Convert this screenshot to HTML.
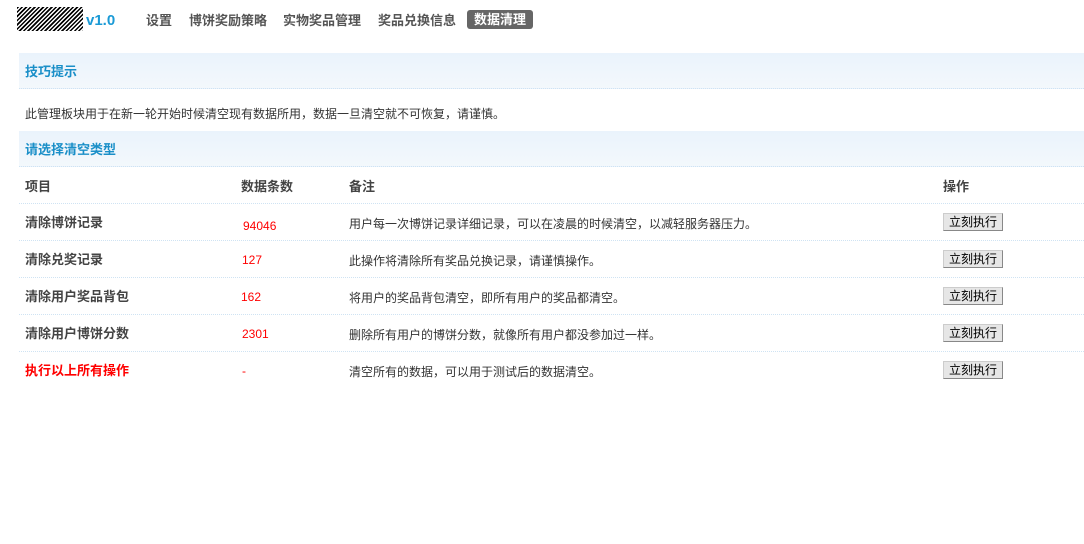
<!DOCTYPE html>
<html><head><meta charset="utf-8"><style>
*{margin:0;padding:0;box-sizing:border-box}
body{width:1084px;height:544px;background:#fff;font-family:"Liberation Sans","Noto Sans CJK SC",sans-serif;font-size:12px;color:#333;position:relative;overflow:hidden}
.a{position:absolute;white-space:nowrap}
.logo{left:17px;top:7px;width:66px;height:24px;background:repeating-linear-gradient(135deg,#000 0 1.5px,#fff 1.5px 3px)}
.ver{left:86px;top:12px;font-size:15px;font-weight:bold;color:#1a9ad6}
.nav{top:10px;font-size:13px;font-weight:bold;color:#555}
.act{left:467px;top:10px;width:66px;height:19px;background:#666;color:#fff;border-radius:3px;font-size:13px;font-weight:bold;text-align:center;line-height:19px}
.hd{left:19px;width:1065px;height:36px;background:linear-gradient(#eaf3fc,#f3f8fc);border-bottom:1px dotted #cfe3f3;color:#1a8fc8;font-weight:bold;font-size:13px;line-height:36px;padding-left:6px}
.line{left:19px;width:1065px;height:0;border-top:1px dotted #cfe3f3}
.th{font-weight:bold;font-size:13px;color:#444}
.nm{font-weight:bold;font-size:13px;color:#444}
.num{color:#f00;font-size:12px}
.btn{left:943px;width:60px;height:18px;background:#e6e6e6;border:1px solid #888;border-top-color:#ccc;border-left-color:#ccc;font-size:12px;text-align:center;line-height:16px;color:#000}
</style></head><body>
<div class="a logo"></div>
<div class="a ver">v1.0</div>
<div class="a nav" style="left:146px">设置</div>
<div class="a nav" style="left:189px">博饼奖励策略</div>
<div class="a nav" style="left:283px">实物奖品管理</div>
<div class="a nav" style="left:378px">奖品兑换信息</div>
<div class="a act">数据清理</div>
<div class="a hd" style="top:53px;line-height:37px">技巧提示</div>
<div class="a" style="left:25px;top:105px">此管理板块用于在新一轮开始时候清空现有数据所用，数据一旦清空就不可恢复，请谨慎。</div>
<div class="a hd" style="top:131px;line-height:38px">请选择清空类型</div>
<div class="a th" style="left:25px;top:176px">项目</div>
<div class="a th" style="left:241px;top:176px">数据条数</div>
<div class="a th" style="left:349px;top:176px">备注</div>
<div class="a th" style="left:943px;top:176px">操作</div>
<div class="a line" style="top:203px"></div>
<div class="a line" style="top:240px"></div>
<div class="a line" style="top:277px"></div>
<div class="a line" style="top:314px"></div>
<div class="a line" style="top:351px"></div>

<div class="a nm" style="left:25px;top:212px">清除博饼记录</div>
<div class="a num" style="left:243px;top:219px">94046</div>
<div class="a" style="left:349px;top:215px">用户每一次博饼记录详细记录，可以在凌晨的时候清空，以减轻服务器压力。</div>
<div class="a btn" style="top:213px">立刻执行</div>

<div class="a nm" style="left:25px;top:249px">清除兑奖记录</div>
<div class="a num" style="left:242px;top:253px">127</div>
<div class="a" style="left:349px;top:252px">此操作将清除所有奖品兑换记录，请谨慎操作。</div>
<div class="a btn" style="top:250px">立刻执行</div>

<div class="a nm" style="left:25px;top:286px">清除用户奖品背包</div>
<div class="a num" style="left:241px;top:290px">162</div>
<div class="a" style="left:349px;top:289px">将用户的奖品背包清空，即所有用户的奖品都清空。</div>
<div class="a btn" style="top:287px">立刻执行</div>

<div class="a nm" style="left:25px;top:323px">清除用户博饼分数</div>
<div class="a num" style="left:242px;top:327px">2301</div>
<div class="a" style="left:349px;top:326px">删除所有用户的博饼分数，就像所有用户都没参加过一样。</div>
<div class="a btn" style="top:324px">立刻执行</div>

<div class="a nm" style="left:25px;top:360px;color:#f00">执行以上所有操作</div>
<div class="a" style="left:242px;top:364px;color:#f00">-</div>
<div class="a" style="left:349px;top:363px">清空所有的数据，可以用于测试后的数据清空。</div>
<div class="a btn" style="top:361px">立刻执行</div>
</body></html>
